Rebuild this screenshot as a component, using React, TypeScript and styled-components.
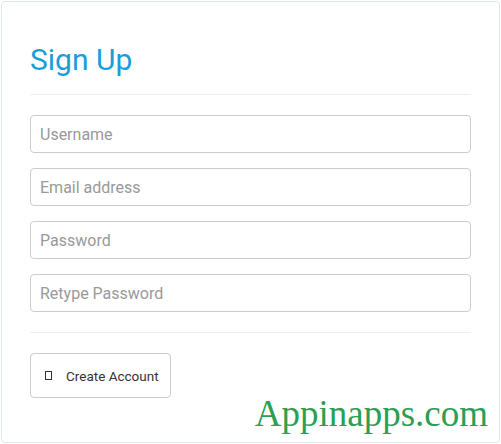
import styled, { createGlobalStyle } from "styled-components";

const GlobalStyle = createGlobalStyle`
  html, body {
    margin: 0;
    padding: 0;
    background: #ffffff;
  }
  * {
    box-sizing: border-box;
  }
`;

const fields = [
  { type: "text", placeholder: "Username" },
  { type: "email", placeholder: "Email address" },
  { type: "password", placeholder: "Password" },
  { type: "password", placeholder: "Retype Password" },
];

function App() {
  return (
    <>
      <GlobalStyle />
      <Page>
        <Card>
          <Header>
            <Title>Sign Up</Title>
          </Header>
          <Form onSubmit={(e) => e.preventDefault()}>
            {fields.map((f) => (
              <Input key={f.placeholder} type={f.type} placeholder={f.placeholder} />
            ))}
          </Form>
          <Footer>
            <Button type="submit">
              <MissingGlyph />
              Create Account
            </Button>
          </Footer>
          <Watermark>Appinapps.com</Watermark>
        </Card>
      </Page>
    </>
  );
}

export default App;

const Page = styled.div`
  padding: 1px;
  width: 501px;
  height: 444px;
`;

const Card = styled.section`
  position: relative;
  width: 499px;
  height: 442px;
  border: 1px solid #dfe7e4;
  border-radius: 4px;
  background: #ffffff;
  padding: 0 28px;
  font-family: Roboto, "Liberation Sans", sans-serif;
`;

const Header = styled.div`
  padding-top: 40px;
  padding-bottom: 16px;
  border-bottom: 1px solid #eeeeee;
`;

const Title = styled.h1`
  margin: 0;
  font-size: 30px;
  line-height: 36px;
  font-weight: 400;
  color: #1a9dd8;
`;

const Form = styled.form`
  display: flex;
  flex-direction: column;
  row-gap: 15px;
  padding: 20px 0 20px;
  border-bottom: 1px solid #eeeeee;
`;

const Input = styled.input`
  width: 100%;
  height: 38px;
  padding: 0 9px;
  border: 1px solid #cccccc;
  border-radius: 4px;
  background: #ffffff;
  font-family: Roboto, "Liberation Sans", sans-serif;
  font-size: 16px;
  color: #555555;
  outline: none;

  &::placeholder {
    color: #999999;
  }
`;

const Footer = styled.div`
  padding-top: 20px;
`;

const Button = styled.button`
  display: flex;
  align-items: center;
  width: 141px;
  height: 45px;
  padding: 0 0 0 14px;
  border: 1px solid #cccccc;
  border-radius: 4px;
  background: #ffffff;
  font-family: Roboto, "Liberation Sans", sans-serif;
  font-size: 13.5px;
  color: #333333;
  cursor: pointer;
`;

const MissingGlyph = styled.span`
  display: inline-block;
  width: 7px;
  height: 9px;
  margin-right: 14px;
  border: 1px solid #333333;
`;

const Watermark = styled.div`
  position: absolute;
  right: 11px;
  bottom: 6px;
  font-family: "Liberation Serif", serif;
  font-size: 37px;
  line-height: 44px;
  color: #2a9f55;
  pointer-events: none;
`;
